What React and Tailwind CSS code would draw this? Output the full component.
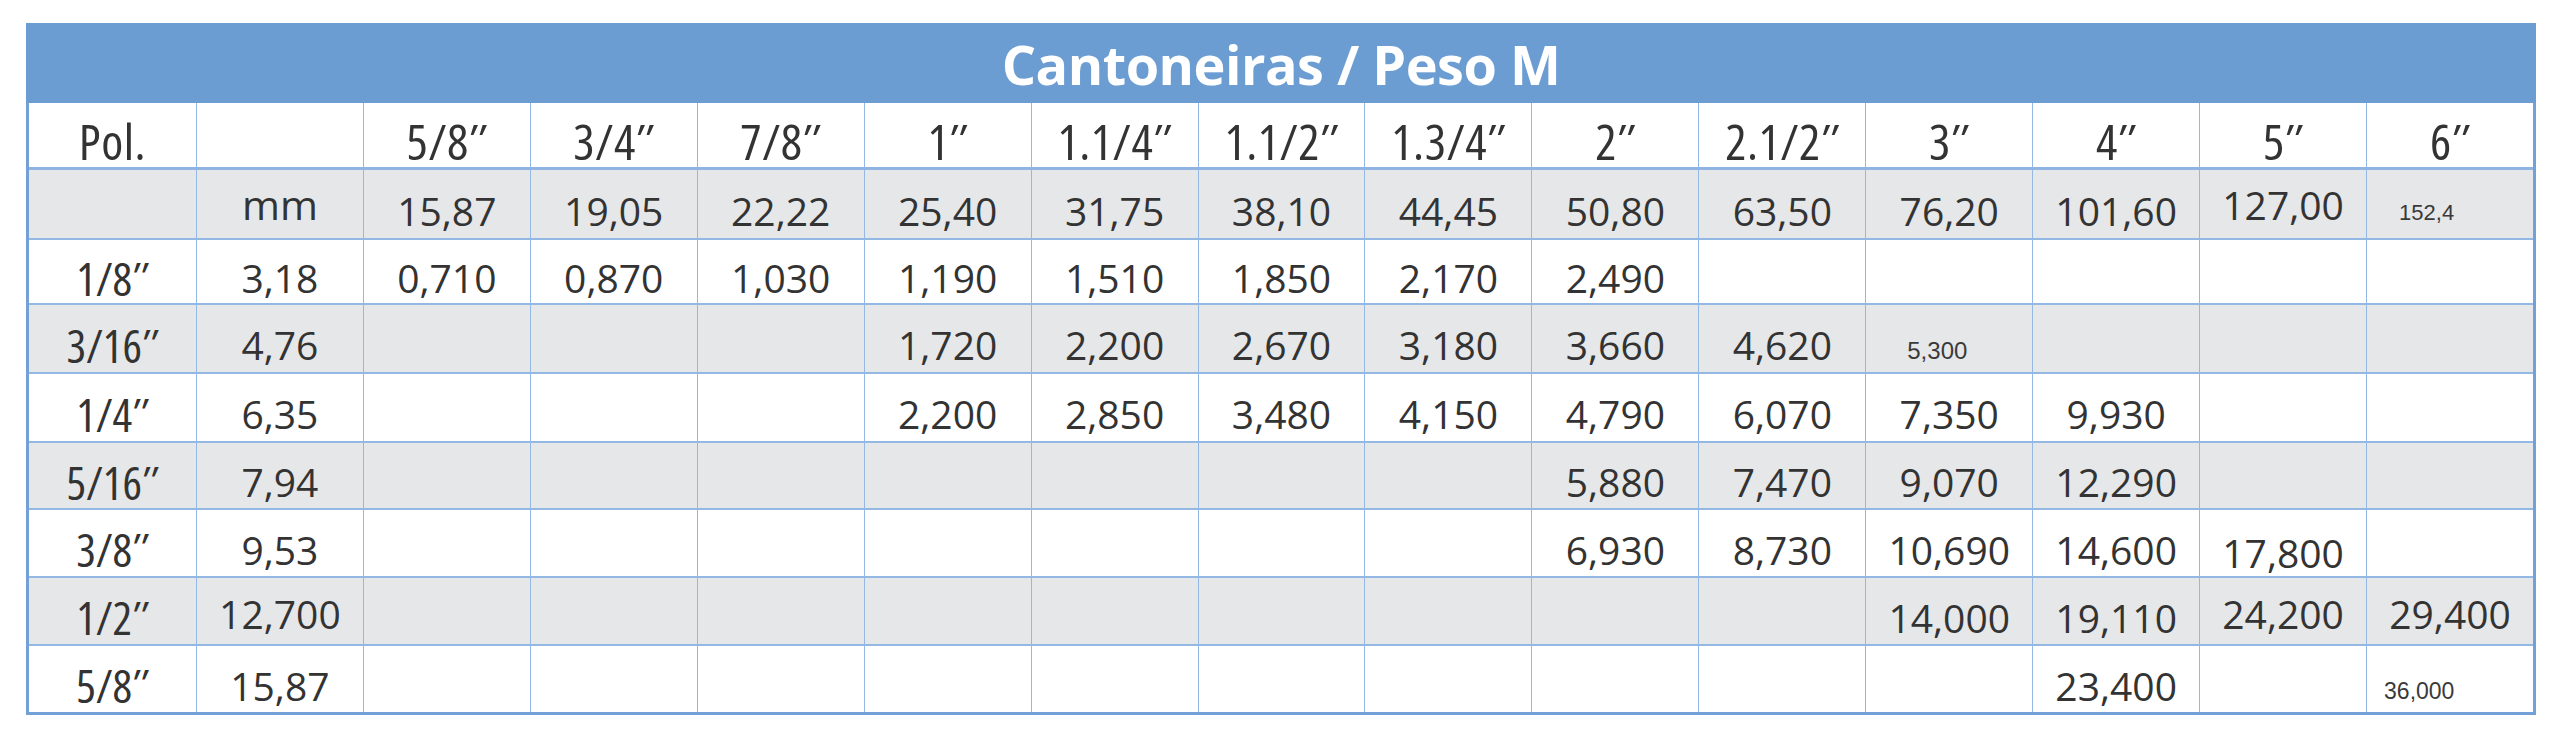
import React from "react";

// small cell: value, span classes, padding class
const S = (v, cls, pad) => ({ v, small: true, cls, pad });

const rows = [
  { bg: "bg-white", h: "h-[64px]", head: true, cells: ["Pol.", "", "5/8″", "3/4″", "7/8″", "1″", "1.1/4″", "1.1/2″", "1.3/4″", "2″", "2.1/2″", "3″", "4″", "5″", "6″"] },
  { bg: "bg-[#e6e7e9]", h: "h-[71px]", cells: ["", { v: "mm", cls: "-translate-y-[6px] text-[41px]!" }, "15,87", "19,05", "22,22", "25,40", "31,75", "38,10", "44,45", "50,80", "63,50", "76,20", "101,60", { v: "127,00", cls: "-translate-y-[6px]" }, S("152,4", "translate-y-[3px]", "pl-[32px]")] },
  { bg: "bg-white", h: "h-[65px]", cells: ["1/8″", "3,18", "0,710", "0,870", "1,030", "1,190", "1,510", "1,850", "2,170", "2,490", "", "", "", "", ""] },
  { bg: "bg-[#e6e7e9]", h: "h-[69px]", cells: ["3/16″", "4,76", "", "", "", "1,720", "2,200", "2,670", "3,180", "3,660", "4,620", S("5,300", "translate-y-[6px] text-[24px]!", "pl-[41px]"), "", "", ""] },
  { bg: "bg-white", h: "h-[69px]", cells: ["1/4″", "6,35", "", "", "", "2,200", "2,850", "3,480", "4,150", "4,790", "6,070", "7,350", "9,930", "", ""] },
  { bg: "bg-[#e6e7e9]", h: "h-[67px]", cells: ["5/16″", "7,94", "", "", "", "", "", "", "", "5,880", "7,470", "9,070", "12,290", "", ""] },
  { bg: "bg-white", h: "h-[68px]", cells: ["3/8″", "9,53", "", "", "", "", "", "", "", "6,930", "8,730", "10,690", "14,600", { v: "17,800", cls: "translate-y-[3px]" }, ""] },
  { bg: "bg-[#e6e7e9]", h: "h-[68px]", cells: ["1/2″", { v: "12,700", cls: "-translate-y-[4px]" }, "", "", "", "", "", "", "", "", "", "14,000", "19,110", { v: "24,200", cls: "-translate-y-[4px]" }, { v: "29,400", cls: "-translate-y-[4px]" }] },
  { bg: "bg-white", h: "h-[68px]", cells: ["5/8″", "15,87", "", "", "", "", "", "", "", "", "", "", "23,400", "", S("36,000", "translate-y-[6px] text-[23px]!", "pl-[17px]")] },
];

function Cell({ c, i, head }) {
  const item = typeof c === "string" ? { v: c } : c;
  const border = i === 0 ? "" : "border-l border-[#94b8e4]";
  if (item.small) {
    return (
      <div className={`flex items-center justify-start pt-[12px] ${item.pad || "pl-[32px]"} ${border}`}>
        <span className={`inline-block font-['Liberation_Sans',Arial,sans-serif] text-[22px] leading-none text-[#3a3a3a] ${item.cls || ""}`}>
          {item.v}
        </span>
      </div>
    );
  }
  let size = "text-[39px] font-stretch-[93%] font-[450]";
  if (head) size = "text-[50px] font-stretch-[87.5%] font-[430] tracking-[0.5px]";
  else if (i === 0) size = "text-[46px] font-stretch-[75%] font-[430]";
  return (
    <div className={`flex items-center justify-center pt-[12px] ${border}`}>
      <span className={`inline-block leading-none text-[#333333] ${size} ${item.cls || ""}`}>{item.v}</span>
    </div>
  );
}

export default function App() {
  return (
    <div className="w-[2560px] h-[743px] bg-white pt-[23px] pl-[26px] font-['Open_Sans',sans-serif]">
      <div className="w-[2510px] border-[3px] border-[#73a1d7] border-t-0">
        <div className="h-[80px] bg-[#6b9dd3] flex items-center justify-center -mx-[3px]">
          <h1 className="text-white font-bold text-[54px] leading-none tracking-[-0.5px] font-stretch-[90%] pt-[2px]">
            Cantoneiras / Peso M
          </h1>
        </div>
        {rows.map((r, ri) => (
          <div
            key={ri}
            className={`grid grid-cols-15 ${r.bg} ${r.h} ${ri === 0 ? "" : ri === 1 ? "border-t-[3px] border-[#8fb4e2]" : "border-t-2 border-[#94b8e4]"}`}
          >
            {r.cells.map((c, i) => (
              <Cell key={i} c={c} i={i} head={r.head} />
            ))}
          </div>
        ))}
      </div>
    </div>
  );
}
